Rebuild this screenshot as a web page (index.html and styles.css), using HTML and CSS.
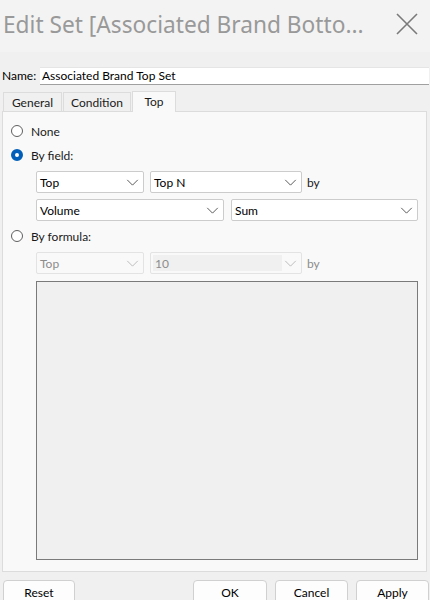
FILE: index.html
```html
<!DOCTYPE html>
<html>
<head>
<meta charset="utf-8">
<link rel="stylesheet" href="styles.css">
</head>
<body>
<div class="titlebar">
  <div class="title">Edit Set [Associated Brand Botto...</div>
  <svg class="close" width="22" height="22" viewBox="0 0 22 22"><path d="M1 1 L21 21 M21 1 L1 21" stroke="#7a7a7a" stroke-width="1.6" fill="none"/></svg>
</div>
<div class="name-row">
  <label class="name-label">Name:</label>
  <div class="name-input">Associated Brand Top Set</div>
</div>
<div class="tabs">
  <div class="tab tab-general">General</div>
  <div class="tab tab-condition">Condition</div>
  <div class="tab tab-active">Top</div>
</div>
<div class="panel">
  <div class="radio-row r-none"><span class="radio"></span><span>None</span></div>
  <div class="radio-row r-field"><span class="radio checked"></span><span>By field:</span></div>
  <div class="combo-row row1">
    <div class="combo w-top"><span>Top</span><svg class="chev" viewBox="0 0 14 8"><path d="M1 1 L7 7 L13 1" stroke="#444" stroke-width="1" fill="none"/></svg></div>
    <div class="combo w-topn"><span>Top N</span><svg class="chev" viewBox="0 0 14 8"><path d="M1 1 L7 7 L13 1" stroke="#444" stroke-width="1" fill="none"/></svg></div>
    <span class="by">by</span>
  </div>
  <div class="combo-row row2">
    <div class="combo w-vol"><span>Volume</span><svg class="chev" viewBox="0 0 14 8"><path d="M1 1 L7 7 L13 1" stroke="#444" stroke-width="1" fill="none"/></svg></div>
    <div class="combo w-sum"><span>Sum</span><svg class="chev" viewBox="0 0 14 8"><path d="M1 1 L7 7 L13 1" stroke="#444" stroke-width="1" fill="none"/></svg></div>
  </div>
  <div class="radio-row r-formula"><span class="radio"></span><span>By formula:</span></div>
  <div class="combo-row row3">
    <div class="combo disabled w-top"><span>Top</span><svg class="chev" viewBox="0 0 14 8"><path d="M1 1 L7 7 L13 1" stroke="#b5b5b5" stroke-width="1" fill="none"/></svg></div>
    <div class="combo disabled w-topn"><span class="edit-box">10</span><svg class="chev" viewBox="0 0 14 8"><path d="M1 1 L7 7 L13 1" stroke="#b5b5b5" stroke-width="1" fill="none"/></svg></div>
    <span class="by dis">by</span>
  </div>
  <div class="formula-box"></div>
</div>
<div class="buttons">
  <div class="btn b-reset">Reset</div>
  <div class="spacer"></div>
  <div class="btn b-ok">OK</div>
  <div class="btn b-cancel">Cancel</div>
  <div class="btn b-apply">Apply</div>
</div>
</body>
</html>
```
FILE: styles.css
```css
html, body {
  margin: 0;
  padding: 0;
}
body {
  width: 430px;
  height: 600px;
  overflow: hidden;
  background: #f0f0f0;
  font-family: Lato, "Noto Sans", "Liberation Sans", sans-serif;
  font-size: 12px;
  color: #1a1a1a;
}
.titlebar {
  height: 52px;
  background: #f3f3f3;
  display: flex;
  align-items: center;
  justify-content: space-between;
  padding: 0 12px 0 3px;
}
.title {
  font-family: "Noto Sans", "Open Sans", sans-serif;
  font-size: 22.7px;
  color: #999999;
  margin-top: -4px;
  white-space: nowrap;
}
.close {
  margin-top: -4px;
}
.name-row {
  display: flex;
  align-items: center;
  margin-top: 14px;
  height: 19px;
  padding-left: 2px;
}
.name-label {
  width: 38px;
  color: #000;
}
.name-input {
  flex: 1;
  height: 18px;
  background: #fff;
  border-bottom: 1px solid #a0a0a0;
  border-top: 1px solid #e5e5e5;
  box-sizing: border-box;
  padding-left: 2px;
  display: flex;
  align-items: center;
  color: #000;
  margin-right: 1px;
}
.tabs {
  display: flex;
  margin-top: 6px;
  padding-left: 3px;
  height: 20px;
  align-items: flex-end;
  position: relative;
  z-index: 1;
}
.tab {
  height: 19px;
  box-sizing: border-box;
  border: 1px solid #dcdcdc;
  border-bottom: none;
  display: flex;
  align-items: center;
  justify-content: center;
  background: #f0f0f0;
  margin-right: 1px;
}
.tab-general { width: 59px; }
.tab-condition { width: 68px; }
.tab-active {
  width: 44px;
  height: 21px;
  margin-bottom: -1px;
  background: #f9f9f9;
  padding-bottom: 2px;
}
.panel {
  margin: 0 3px 0 2px;
  height: 461px;
  box-sizing: border-box;
  border: 1px solid #dcdcdc;
  background: #f9f9f9;
  display: flex;
  flex-direction: column;
}
.radio-row {
  display: flex;
  align-items: center;
  height: 14px;
  padding-left: 8px;
  gap: 8px;
}
.r-none { margin-top: 12px; }
.r-field { margin-top: 10px; }
.r-formula { margin-top: 8px; }
.radio {
  width: 12px;
  height: 12px;
  border-radius: 50%;
  box-sizing: border-box;
  border: 1px solid #5f5f5f;
  background: #fff;
}
.radio.checked {
  border: 4px solid #005fb8;
  background: #fff;
}
.combo-row {
  display: flex;
  align-items: center;
  padding-left: 33px;
  height: 22px;
  gap: 6px;
}
.row1 { margin-top: 9px; }
.row2 { margin-top: 6px; gap: 7px; }
.row3 { margin-top: 9px; }
.combo {
  height: 22px;
  box-sizing: border-box;
  background: #fff;
  border: 1px solid #cccccc;
  border-radius: 2px;
  display: flex;
  align-items: center;
  justify-content: space-between;
  padding: 0 4px 0 3px;
  color: #000;
}
.chev {
  width: 13px;
  height: 7px;
}
.w-top { width: 108px; }
.w-topn { width: 152px; }
.w-vol { width: 188px; }
.w-sum { width: 187px; }
.combo.disabled {
  background: #f9f9f9;
  border-color: #e3e3e3;
  color: #8c8c8c;
}
.edit-box {
  background: #f0f0f0;
  width: 129px;
  height: 16px;
  display: flex;
  align-items: center;
  padding-left: 2px;
  margin-left: -1px;
  box-sizing: border-box;
}
.by {
  margin-left: -1px;
}
.by.dis { color: #8c8c8c; }
.formula-box {
  margin-top: 7px;
  margin-left: 33px;
  width: 382px;
  height: 279px;
  box-sizing: border-box;
  border: 1px solid #7a7a7a;
  background: #f0f0f0;
}
.buttons {
  display: flex;
  margin-top: 8px;
  padding: 0 1px 0 3px;
  gap: 8px;
}
.spacer { flex: 1; }
.btn {
  width: 72px;
  height: 24px;
  box-sizing: border-box;
  border: 1px solid #d0d0d0;
  border-radius: 4px;
  background: #fdfdfd;
  display: flex;
  align-items: center;
  justify-content: center;
  color: #000;
}
.b-ok { width: 74px; }
.b-cancel { width: 73px; }
.b-apply { width: 73px; }
```
